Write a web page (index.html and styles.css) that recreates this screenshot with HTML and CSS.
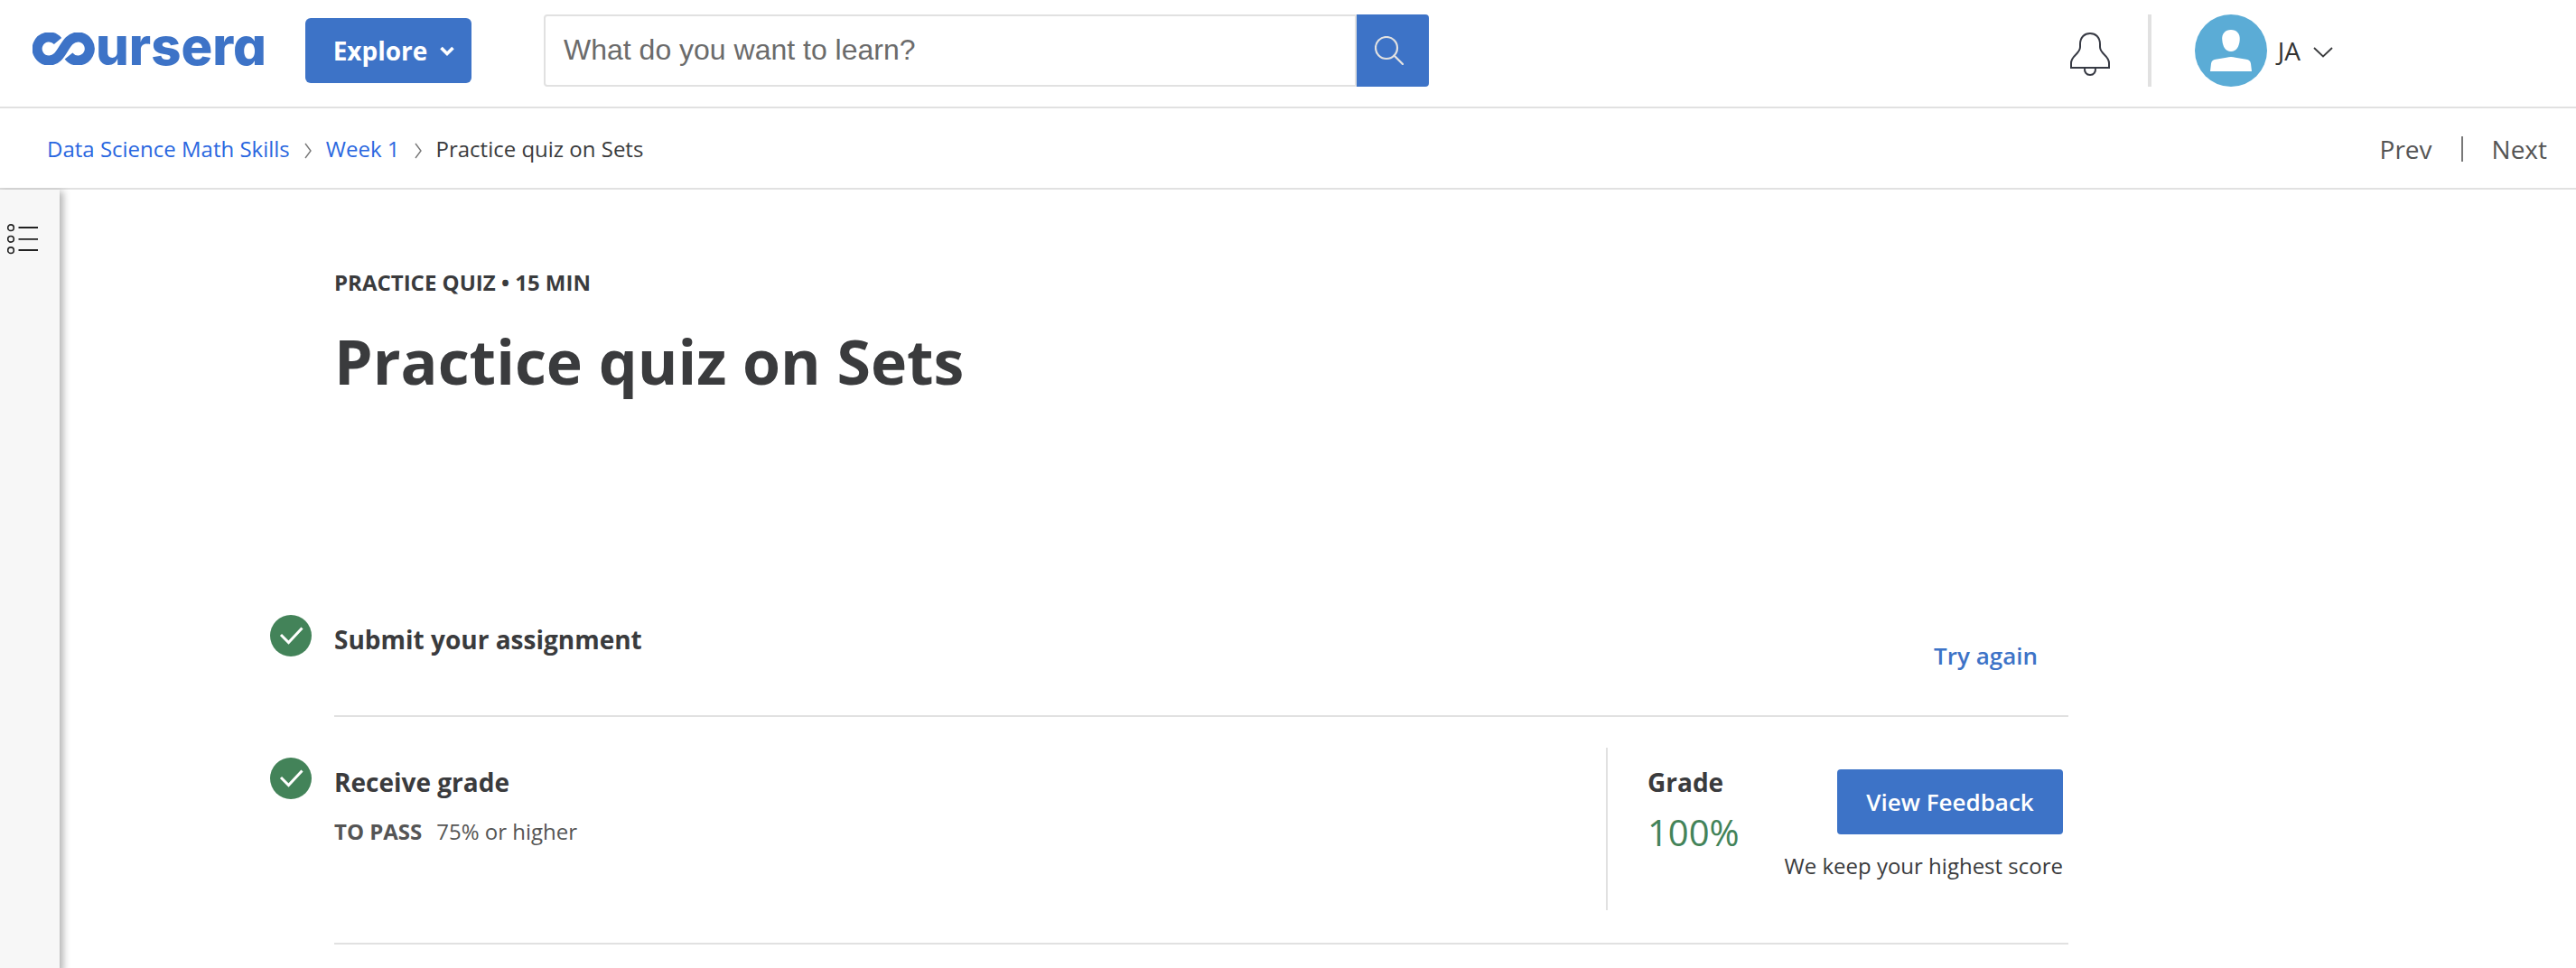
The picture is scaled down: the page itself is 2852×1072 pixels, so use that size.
FILE: index.html
```html
<!DOCTYPE html>
<html lang="en">
<head>
<meta charset="utf-8">
<title>Practice quiz on Sets | Coursera</title>
<meta name="viewport" content="width=device-width, initial-scale=1">
<link rel="stylesheet" href="styles.css">
</head>
<body>
<header class="topbar">
  <a class="logo" href="#" aria-label="Coursera">
    <svg class="logo-mark" viewBox="0 0 70 36" aria-hidden="true"><path d="M28 9.500A13 13 0 1 0 18.500 31C34.500 31 34 5 50.500 5A13 13 0 1 1 40 26" fill="none" stroke="currentColor" stroke-width="11"/></svg>
    <span class="logo-word">ursera</span>
  </a>
  <button class="explore" type="button">Explore
    <svg class="explore-caret" viewBox="0 0 16 12" aria-hidden="true"><path d="M1.500 2L8 8.500L14.500 2" fill="none" stroke="currentColor" stroke-width="3.600"/></svg>
  </button>
  <form class="search" role="search">
    <input class="search-input" type="text" placeholder="What do you want to learn?" aria-label="Search">
    <button class="search-button" type="button" aria-label="Search">
      <svg class="search-icon" viewBox="0 0 32 32" aria-hidden="true"><circle cx="13" cy="13" r="12" fill="none" stroke="currentColor" stroke-width="2.200"/><path d="M21.500 21.500L31 31" stroke="currentColor" stroke-width="2.400" stroke-linecap="round"/></svg>
    </button>
  </form>
  <div class="account">
    <button class="icon-button" type="button" aria-label="Notifications">
      <svg class="bell" viewBox="0 0 44 48" fill="none" stroke="currentColor" stroke-width="2" aria-hidden="true"><path d="M1 39V34C1 25 11 24 11 16V13C11 5 16 1 22 1S33 5 33 13V16C33 24 43 25 43 34V39Z"/><path d="M16 39C15.500 44 18 47 22 47S28.500 44 28 39"/></svg>
    </button>
    <span class="account-divider"></span>
    <button class="user" type="button">
      <svg class="avatar" viewBox="0 0 80 80" aria-hidden="true"><circle cx="40" cy="40" r="40" fill="#5bacd6"/><path fill="#fff" d="M40 17C46.500 17 50.500 21.500 49.700 28.500C49 36 46 41 40 41S31 36 30.300 28.500C29.500 21.500 33.500 17 40 17ZM17 63L18 54.500C18.500 51.500 20 50.500 23 49.800L35 47.800Q40 46.200 45 47.800L57 49.800C60 50.500 61.500 51.500 62 54.500L63 63Z"/></svg>
      <span class="user-name">JA</span>
      <svg class="user-caret" viewBox="0 0 22 12" aria-hidden="true"><path d="M1 1L11 10.500L21 1" fill="none" stroke="currentColor" stroke-width="1.800"/></svg>
    </button>
  </div>
</header>

<div class="subbar">
  <nav class="crumbs" aria-label="Breadcrumb">
    <a href="#">Data Science Math Skills</a>
    <svg class="crumb-sep" viewBox="0 0 8 18" aria-hidden="true"><path d="M1 1L7 9L1 17" fill="none" stroke="currentColor" stroke-width="1.400"/></svg>
    <a href="#">Week 1</a>
    <svg class="crumb-sep" viewBox="0 0 8 18" aria-hidden="true"><path d="M1 1L7 9L1 17" fill="none" stroke="currentColor" stroke-width="1.400"/></svg>
    <span>Practice quiz on Sets</span>
  </nav>
  <nav class="pager" aria-label="Items">
    <a href="#">Prev</a>
    <span class="pager-divider"></span>
    <a href="#">Next</a>
  </nav>
</div>

<div class="body">
  <aside class="rail">
    <button class="icon-button" type="button" aria-label="Course outline">
      <svg class="outline-icon" viewBox="0 0 34 34" fill="none" stroke="currentColor" aria-hidden="true"><g stroke-width="1.600"><circle cx="4" cy="4.200" r="3.300"/><circle cx="4" cy="16.800" r="3.300"/><circle cx="4" cy="29.200" r="3.300"/></g><path d="M12.500 4H34M12.500 16.800H34M12.500 29H34" stroke-width="1.800"/></svg>
    </button>
  </aside>
  <main class="content">
    <div class="heading">
      <p class="kind">PRACTICE QUIZ • 15 MIN</p>
      <h1 class="title">Practice quiz on Sets</h1>
    </div>

    <section class="step">
      <svg class="check" viewBox="0 0 46 46" aria-hidden="true"><circle cx="23" cy="23" r="23" fill="#438359"/><path d="M12 22L20.500 30.500L35.500 14.500" fill="none" stroke="#fff" stroke-width="3"/></svg>
      <div class="step-row step-submit">
        <h2 class="step-title">Submit your assignment</h2>
        <a class="retry" href="#">Try again</a>
      </div>
    </section>

    <section class="step">
      <svg class="check" viewBox="0 0 46 46" aria-hidden="true"><circle cx="23" cy="23" r="23" fill="#438359"/><path d="M12 22L20.500 30.500L35.500 14.500" fill="none" stroke="#fff" stroke-width="3"/></svg>
      <div class="step-row step-grade">
        <div class="criteria">
          <h2 class="step-title">Receive grade</h2>
          <p class="pass"><strong>TO PASS</strong><span>75% or higher</span></p>
        </div>
        <div class="result">
          <div class="grade">
            <h2 class="step-title">Grade</h2>
            <p class="score">100%</p>
          </div>
          <div class="feedback">
            <button class="feedback-button" type="button">View Feedback</button>
            <p class="note">We keep your highest score</p>
          </div>
        </div>
      </div>
    </section>
  </main>
</div>
</body>
</html>
```
FILE: styles.css
```css
* { box-sizing: border-box; }

body {
  margin: 0;
  min-height: 100vh;
  display: flex;
  flex-direction: column;
  background: #fff;
  color: #3a3b3d;
  font-family: "Open Sans", "Noto Sans", sans-serif;
  font-size: 24px;
  line-height: 36px;
}

h1, h2, p { margin: 0; }
a { color: inherit; text-decoration: none; }
svg { display: block; flex: none; }

button {
  border: 0;
  padding: 0;
  background: none;
  color: inherit;
  font: inherit;
  cursor: pointer;
}

/* Top bar */
.topbar {
  display: flex;
  align-items: flex-start;
  padding: 16px 269px 22px 36px;
  border-bottom: 2px solid #e1e1e1;
}

.logo {
  display: flex;
  align-items: center;
  width: 254px;
  height: 76px;
  color: #3d73c7;
}
.logo-mark { width: 70px; height: 36px; }
.logo-word {
  padding-bottom: 6px;
  font-family: Inter, sans-serif;
  font-size: 58px;
  font-weight: 800;
  line-height: 60px;
  font-feature-settings: "cv11";
}

.explore {
  display: flex;
  align-items: center;
  justify-content: center;
  gap: 14px;
  width: 184px;
  height: 72px;
  margin: 4px 80px 0 48px;
  padding-left: 12px;
  border-radius: 6px;
  background: #3d73c7;
  color: #fff;
  font-size: 28px;
  font-weight: 700;
}
.explore-caret { width: 16px; height: 12px; margin-top: 2px; }

.search {
  display: flex;
  flex: 0 1 980px;
  height: 80px;
}
.search-input {
  flex: 1;
  min-width: 0;
  padding: 0 20px 2px;
  border: 2px solid #e1e1e1;
  border-radius: 4px 0 0 4px;
  background: #fff;
  color: #3a3b3d;
  font: 32px "Liberation Sans", Arial, sans-serif;
}
.search-input::placeholder { color: #6b6b6b; opacity: 1; }
.search-button {
  display: grid;
  place-items: center;
  width: 80px;
  padding-right: 8px;
  border-radius: 0 4px 4px 0;
  background: #3d73c7;
  color: #e1e1e1;
}
.search-icon { width: 32px; height: 32px; }

.account {
  display: flex;
  align-items: center;
  margin-left: auto;
}
.bell { width: 44px; height: 48px; color: #373a44; }
.account .icon-button { padding-top: 8px; }
.account-divider {
  width: 4px;
  height: 80px;
  margin: 0 48px 0 42px;
  background: #e1e1e1;
}
.user {
  display: flex;
  align-items: center;
  font-size: 28px;
}
.avatar { width: 80px; height: 80px; }
.user-name { margin: 0 14px 0 12px; color: #333; }
.user-caret { width: 22px; height: 12px; margin-top: 4px; }

/* Breadcrumb bar */
.subbar {
  display: flex;
  align-items: center;
  justify-content: space-between;
  padding: 27px 32px 25px 52px;
  border-bottom: 2px solid #e1e1e1;
}
.crumbs {
  display: flex;
  align-items: center;
  gap: 16px;
}
.crumbs a { color: #2a67e0; }
.crumb-sep { width: 8px; height: 18px; margin-top: 4px; color: #777; }
.pager {
  display: flex;
  align-items: center;
  gap: 32px;
  color: #555;
  font-size: 28px;
}
.pager-divider { width: 2px; height: 28px; background: #777; }

/* Page body */
.body {
  display: flex;
  flex: 1;
}
.rail {
  flex: none;
  width: 66px;
  padding: 38px 0 0 8px;
  background: #f7f7f7;
  box-shadow: 2px 4px 8px 2px rgba(0, 0, 0, 0.3);
  clip-path: inset(-2px -16px 0 0);
}
.outline-icon { width: 34px; height: 34px; color: #222; }

.content {
  flex: 0 1 2224px;
  min-width: 0;
  padding: 85px 0 24px 233px;
}
.heading { padding: 0 0 188px 71px; }
.kind { font-weight: 700; }
.title {
  margin-top: 21px;
  font-size: 68px;
  font-weight: 700;
  line-height: 96px;
}

.step {
  display: flex;
  align-items: flex-start;
  gap: 25px;
}
.check { width: 46px; height: 46px; margin-top: 45px; }
.step-row {
  display: flex;
  flex: 1;
  justify-content: space-between;
  border-bottom: 2px solid #e1e1e1;
}
.step-submit {
  padding: 52px 34px 46px 0;
}
.step-title {
  font-size: 28px;
  font-weight: 700;
  line-height: 40px;
}
.retry {
  margin-top: 20px;
  padding-bottom: 2px;
  color: #3d73c7;
  font-size: 26px;
  font-weight: 600;
}

.step-grade { padding: 34px 6px 36px 0; }
.criteria { padding-top: 18px; }
.pass {
  display: flex;
  gap: 16px;
  margin-top: 17px;
  color: #555;
}
.result {
  display: flex;
  justify-content: space-between;
  width: 506px;
  height: 180px;
  padding-left: 44px;
  border-left: 2px solid #e1e1e1;
}
.grade { padding-top: 18px; }
.score {
  color: #438359;
  font-size: 40px;
  line-height: 56px;
  margin-top: 8px;
}
.feedback {
  display: flex;
  flex-direction: column;
  align-items: flex-end;
  padding-top: 24px;
}
.feedback-button {
  width: 250px;
  height: 72px;
  border-radius: 4px;
  background: #3d73c7;
  color: #fff;
  font-size: 26px;
  font-weight: 600;
}
.note { margin-top: 17px; }
```
